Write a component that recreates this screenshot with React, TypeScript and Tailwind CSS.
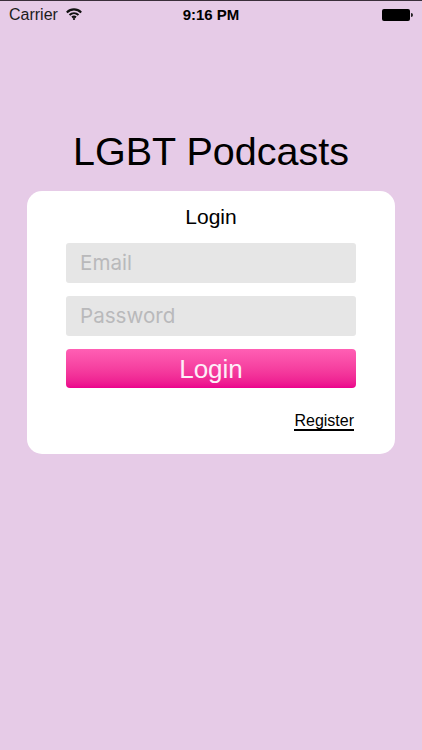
export default function App() {
  return (
    <main className="flex flex-col h-[750px] w-[422px] overflow-hidden bg-[#e6cbe7] font-['Liberation_Sans',Arial,sans-serif] text-black">
      <div className="h-px bg-[#3a2f3a]" />
      <div className="grid grid-cols-3 items-center h-[28px] pl-[9px] pr-[9px] text-[15px]">
        <div className="flex items-center gap-[8px] text-[16px] text-[#1c1c1c]">
          <span>Carrier</span>
          <svg width="16" height="12" viewBox="0 0 16 12" fill="none" stroke="#111" strokeWidth="2.1" className="-mt-[3px]">
            <path d="M.8 4.4C5 .4 11 .4 15.2 4.4" />
            <path d="M3.5 7c2.6-2.3 6.4-2.3 9 0" />
            <path d="M6 9.4c1.2-.9 2.8-.9 4 0" />
            <circle cx="8" cy="11" r=".7" fill="#111" strokeWidth="1" />
          </svg>
        </div>
        <div className="text-center font-bold whitespace-nowrap">9:16 PM</div>
        <div className="flex justify-end items-center">
          <div className="w-[28px] h-[12px] rounded-[2px] bg-black" />
          <div className="w-[2px] h-[4px] ml-px rounded-r-sm bg-[#222]" />
        </div>
      </div>
      <h1 className="mt-[99px] text-center text-[39.5px] leading-[47px] whitespace-nowrap">LGBT Podcasts</h1>
      <section className="mx-[27px] mt-[16px] h-[263px] rounded-[15px] bg-white px-[39px]">
        <h2 className="pt-[14px] text-center text-[21px] leading-[24px]">Login</h2>
        <div className="mt-[14px] flex flex-col gap-[13px]">
          <div className="h-[40px] rounded-[3px] bg-[#e6e6e6] px-[14px] font-['Inter',sans-serif] text-[20.6px] leading-[39px] text-[#b9b9bb]">Email</div>
          <div className="h-[40px] rounded-[3px] bg-[#e6e6e6] px-[14px] font-['Inter',sans-serif] text-[20.6px] leading-[39px] text-[#b9b9bb]">Password</div>
          <button className="h-[39px] rounded-[4px] bg-gradient-to-b from-[#ff5fb4] to-[#ec008c] text-center text-[26px] leading-[40px] text-[#fdeef7]">Login</button>
        </div>
        <div className="mt-[25px] flex justify-end pr-[2px]">
          <span className="border-b-2 border-black text-[16px] leading-[16px]">Register</span>
        </div>
      </section>
    </main>
  );
}
